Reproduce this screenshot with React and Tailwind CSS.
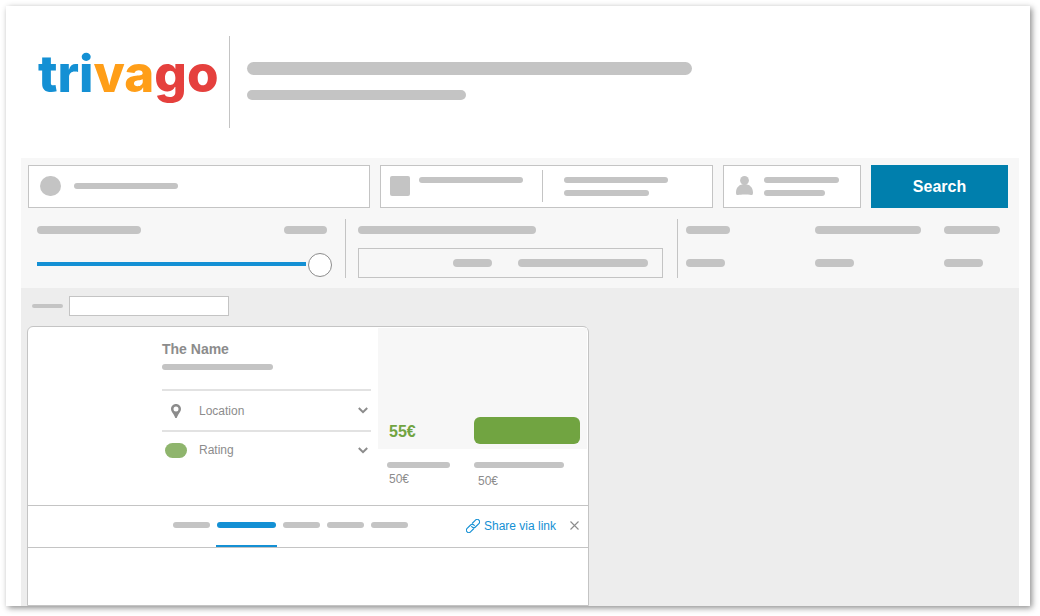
import React, { useState } from 'react';

const Bar = ({ className }) => (
  <span className={`block shrink-0 rounded-full ${className}`} />
);

const Logo = () => (
  <a
    href="#"
    className="block w-[208px] shrink-0 pb-4 pl-[17px] font-['Inter',sans-serif] text-[51px] leading-[60px] font-extrabold"
  >
    <span className="text-[#1490d4]">tri</span>
    <span className="text-[#ff9e18]">va</span>
    <span className="text-[#e5403d]">go</span>
  </a>
);

const GuestIcon = () => (
  <svg width="17" height="20" viewBox="0 0 17 20" fill="#c4c4c4" className="shrink-0">
    <circle cx="8.5" cy="4.4" r="4.4" />
    <path d="M0 16.500C0 11.500 3.500 8 8.500 8S17 11.500 17 16.500C17 18.700 16.200 19.300 15 19C12 18.200 5 18.200 2 19C0.800 19.300 0 18.700 0 16.500Z" />
  </svg>
);

const PinIcon = () => (
  <svg width="10" height="14" viewBox="0 0 10 14" fill="#8c8c8c">
    <path
      fillRule="evenodd"
      d="M5 0C2.200 0 0 2.200 0 5C0 7 1.400 8.500 2.500 10.200C3.300 11.500 3.900 12.800 4.300 14H5.700C6.100 12.800 6.700 11.500 7.500 10.200C8.600 8.500 10 7 10 5C10 2.200 7.800 0 5 0ZM5 2.400A2.500 2.500 0 1 1 5 7.400A2.500 2.500 0 0 1 5 2.400Z"
    />
  </svg>
);

const ChevronIcon = () => (
  <svg width="10" height="7" viewBox="0 0 10 7" fill="none" stroke="#8c8c8c" strokeWidth="2">
    <path d="M0.800 1L5 5.200L9.200 1" />
  </svg>
);

const LinkIcon = () => (
  <svg
    width="14"
    height="14"
    viewBox="-7 -7 14 14"
    fill="none"
    stroke="currentColor"
    strokeWidth="1.1"
    strokeLinecap="round"
  >
    <g transform="rotate(-45)">
      <path d="M-1.500 2.400H-5.900A2.400 2.400 0 0 1 -5.900 -2.400H-1A2.400 2.400 0 0 1 1.300 0.600" />
      <path d="M1.500 -2.400H5.900A2.400 2.400 0 0 1 5.900 2.400H1A2.400 2.400 0 0 1 -1.300 -0.600" />
    </g>
  </svg>
);

const CloseIcon = () => (
  <svg width="9" height="9" viewBox="0 0 9 9" fill="none" stroke="#8c8c8c" strokeWidth="1.1">
    <path d="M0.500 0.500L8.500 8.500M8.500 0.500L0.500 8.500" />
  </svg>
);

const SearchBar = () => (
  <form
    onSubmit={(e) => e.preventDefault()}
    className="grid h-[43px] grid-cols-[342fr_333fr_138fr_137fr] gap-[10px]"
  >
    <button
      type="button"
      aria-label="Destination"
      className="flex items-center gap-[13px] border border-[#c4c4c4] bg-white pb-px pl-[11px]"
    >
      <Bar className="h-5 w-[21px] bg-[#c4c4c4]" />
      <Bar className="h-[6px] w-[104px] bg-[#c4c4c4]" />
    </button>
    <button
      type="button"
      aria-label="Dates"
      className="flex items-center border border-[#c4c4c4] bg-white pb-px pl-[9px]"
    >
      <span className="block size-5 shrink-0 rounded-xs bg-[#c4c4c4]" />
      <span className="ml-[9px] h-5 pt-px">
        <Bar className="h-[6px] w-[104px] bg-[#c4c4c4]" />
      </span>
      <span className="ml-[19px] h-8 w-px bg-[#c4c4c4]" />
      <span className="ml-[21px] flex flex-col gap-[7px]">
        <Bar className="h-[6px] w-[104px] bg-[#c4c4c4]" />
        <Bar className="h-[6px] w-[85px] bg-[#c4c4c4]" />
      </span>
    </button>
    <button
      type="button"
      aria-label="Guests"
      className="flex items-center gap-[11px] border border-[#c4c4c4] bg-white pb-px pl-[12px]"
    >
      <GuestIcon />
      <span className="flex flex-col gap-[7px]">
        <Bar className="h-[6px] w-[75px] bg-[#c4c4c4]" />
        <Bar className="h-[6px] w-[61px] bg-[#c4c4c4]" />
      </span>
    </button>
    <button type="submit" className="bg-[#007fad] text-base font-bold text-white">
      Search
    </button>
  </form>
);

const Filters = () => {
  const [price, setPrice] = useState(100);

  return (
    <div className="mt-[11px] grid h-[59px] grid-cols-[318fr_332fr_330fr]">
      <div className="border-r border-[#c4c4c4] pt-[7px] pr-[13px] pl-[9px]">
        <div className="flex justify-between pr-[5px]">
          <Bar className="h-2 w-[104px] bg-[#c4c4c4]" />
          <Bar className="h-2 w-[43px] bg-[#c4c4c4]" />
        </div>
        <input
          type="range"
          aria-label="Price"
          value={price}
          onChange={(e) => setPrice(e.target.value)}
          className="mt-[19px] block h-6 w-full appearance-none bg-[linear-gradient(#1490d4,#1490d4)] bg-[length:calc(100%-26px)_4px] bg-[position:0_9px] bg-no-repeat [&::-webkit-slider-thumb]:size-6 [&::-webkit-slider-thumb]:appearance-none [&::-webkit-slider-thumb]:rounded-full [&::-webkit-slider-thumb]:border [&::-webkit-slider-thumb]:border-[#8c8c8c] [&::-webkit-slider-thumb]:bg-white"
        />
      </div>

      <div className="border-r border-[#c4c4c4] pt-[7px] pr-[14px] pl-[12px]">
        <Bar className="h-2 w-[178px] bg-[#c4c4c4]" />
        <div className="mt-[14px] flex h-[30px] items-center justify-end gap-[26px] border border-[#c4c4c4] pr-[14px]">
          <Bar className="h-2 w-[39px] bg-[#c4c4c4]" />
          <Bar className="h-2 w-[130px] bg-[#c4c4c4]" />
        </div>
      </div>

      <div className="grid grid-cols-[129fr_129fr_64fr] content-start gap-y-[25px] pt-[7px] pl-2">
        <Bar className="h-2 w-[44px] bg-[#c4c4c4]" />
        <Bar className="h-2 w-[106px] bg-[#c4c4c4]" />
        <Bar className="h-2 w-[56px] bg-[#c4c4c4]" />
        <Bar className="h-2 w-[39px] bg-[#c4c4c4]" />
        <Bar className="h-2 w-[39px] bg-[#c4c4c4]" />
        <Bar className="h-2 w-[39px] bg-[#c4c4c4]" />
      </div>
    </div>
  );
};

const HotelInfo = () => (
  <div className="w-[209px] text-xs text-[#8c8c8c]">
    <h2 className="pt-[12px] text-sm leading-5 font-bold">The Name</h2>
    <Bar className="mt-[5px] h-[6px] w-[111px] bg-[#c4c4c4]" />
    <button
      type="button"
      className="mt-[19px] flex h-[41px] w-full items-center border-t-2 border-[#e2e2e2] pr-[3px]"
    >
      <span className="flex w-[37px] pl-[9px]">
        <PinIcon />
      </span>
      <span>Location</span>
      <span className="ml-auto">
        <ChevronIcon />
      </span>
    </button>
    <button
      type="button"
      className="flex h-[38px] w-full items-center border-t-2 border-[#e2e2e2] pr-[3px]"
    >
      <span className="flex w-[37px] pl-[3px]">
        <Bar className="h-[15px] w-[22px] bg-[#8fb56d]" />
      </span>
      <span>Rating</span>
      <span className="ml-auto">
        <ChevronIcon />
      </span>
    </button>
  </div>
);

const Prices = () => (
  <div className="mt-px mr-px ml-auto w-[209px] text-xs text-[#8c8c8c]">
    <div className="flex h-[121px] items-end bg-[#f7f7f7] pr-[7px] pb-[5px]">
      <strong className="pl-[11px] text-base text-[#71a441]">55€</strong>
      <button
        type="button"
        aria-label="View deal"
        className="ml-auto h-[27px] w-[106px] rounded-md bg-[#71a441]"
      />
    </div>
    <div className="grid grid-cols-[87px_1fr] pt-[13px] pl-[9px]">
      <div>
        <Bar className="h-[6px] w-[63px] bg-[#c4c4c4]" />
        <p className="pt-[3px] pl-[2px]">50€</p>
      </div>
      <div>
        <Bar className="h-[6px] w-[90px] bg-[#c4c4c4]" />
        <p className="pt-[5px] pl-1">50€</p>
      </div>
    </div>
  </div>
);

const tabs = ['Info', 'Photos', 'Reviews', 'Deals', 'More'];

const Tabs = () => {
  const [active, setActive] = useState('Photos');

  return (
    <div className="flex h-[43px] items-stretch border-y border-[#c4c4c4] pr-[9px] pl-[144px]">
      {tabs.map((tab) => (
        <button
          key={tab}
          type="button"
          aria-label={tab}
          onClick={() => setActive(tab)}
          className={`mr-[5px] flex items-start border-b-2 px-px pt-4 ${
            tab === active ? 'border-[#1490d4]' : 'border-transparent'
          }`}
        >
          <Bar
            className={`h-[6px] ${
              tab === active ? 'w-[59px] bg-[#1490d4]' : 'w-[37px] bg-[#c4c4c4]'
            }`}
          />
        </button>
      ))}
      <a href="#" className="ml-auto flex items-center gap-1 pb-[2px] text-xs text-[#1490d4]">
        <LinkIcon />
        Share via link
      </a>
      <button type="button" aria-label="Close" className="ml-[14px] pb-[2px]">
        <CloseIcon />
      </button>
    </div>
  );
};

export default function App() {
  return (
    <div className="overflow-hidden bg-white font-['Liberation_Sans',Arial,sans-serif]">
      <div className="mt-[6px] mr-[10px] mb-[10px] ml-[6px] bg-white pr-[11px] pl-[15px] shadow-[2px_2px_6px_rgba(0,0,0,0.45)]">
        <header className="flex h-[152px] items-center">
          <Logo />
          <div className="flex h-[92px] grow flex-col border-l border-[#c4c4c4] pt-[26px] pl-[17px]">
            <Bar className="h-[13px] w-[445px] bg-[#c4c4c4]" />
            <Bar className="mt-[15px] h-[10px] w-[219px] bg-[#c4c4c4]" />
          </div>
        </header>

        <section className="bg-[#f7f7f7] pt-[7px] pr-[11px] pb-[10px] pl-[7px]">
          <SearchBar />
          <Filters />
        </section>

        <main className="bg-[#ededed] pt-2 pl-[6px]">
          <label className="flex items-center gap-[6px] pl-[5px]">
            <Bar className="h-1 w-[31px] bg-[#c4c4c4]" />
            <input
              type="text"
              aria-label="Sort by"
              className="h-5 w-40 border border-[#c4c4c4] bg-white px-1 text-xs"
            />
          </label>

          <article className="mt-[10px] w-[562px] rounded-t-md border border-[#c4c4c4] bg-white">
            <div className="flex h-[178px] pl-[134px]">
              <HotelInfo />
              <Prices />
            </div>
            <Tabs />
            <div className="h-[57px]" />
          </article>
        </main>
      </div>
    </div>
  );
}
